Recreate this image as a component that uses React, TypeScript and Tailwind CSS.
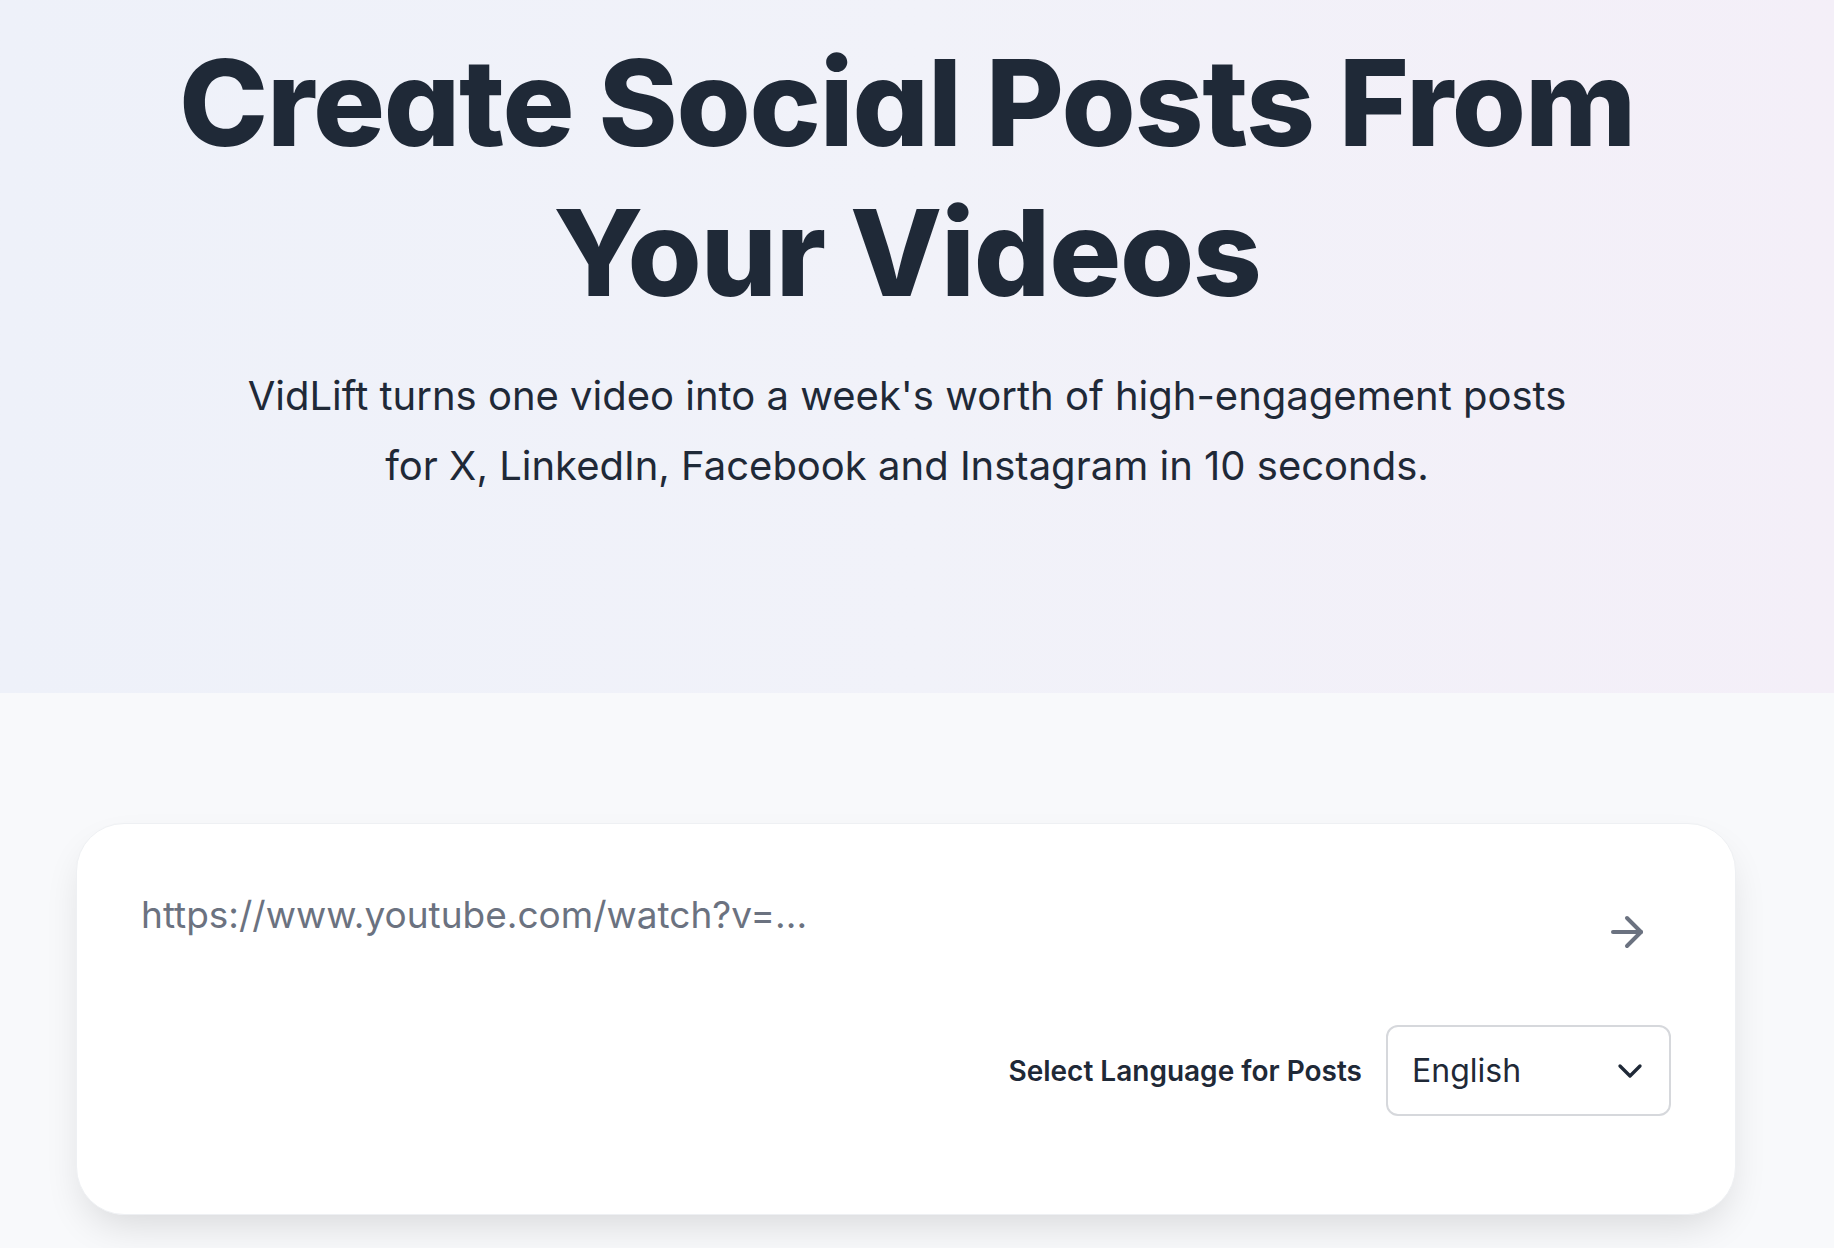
import { ArrowRight, ChevronDown } from 'lucide-react';

export default function App() {
  return (
    <div className="min-h-screen bg-[#f8f9fb] font-['Inter','Noto_Sans',sans-serif] text-[#1f2937]">
      {/* Hero */}
      <section className="h-[693px] bg-linear-to-r from-[#eef1f9] via-[#f1f2f9] to-[#f4eff8] pr-[20px]">
        <h1 className="mx-auto max-w-[1600px] pt-[28px] text-center text-[120px] leading-[150px] font-extrabold tracking-[-0.01em] [font-feature-settings:'cv11']">
          Create Social Posts From Your Videos
        </h1>
        <p className="mx-auto mt-[33px] max-w-[1370px] text-center text-[40px] leading-[70px] text-[#1f2937]">
          VidLift turns one video into a week's worth of high-engagement posts for X, LinkedIn, Facebook and Instagram in 10 seconds.
        </p>
      </section>

      {/* Input card */}
      <section className="pr-[22px] pt-[130px] pb-[40px]">
        <div className="mx-auto max-w-[1660px] rounded-[48px] border border-[#eef0f3] bg-white px-[64px] pt-[64px] pb-[98px] shadow-[0_18px_40px_-10px_rgba(0,0,0,0.14)]">
          <div className="flex items-start gap-6">
            <input
              type="text"
              placeholder="https://www.youtube.com/watch?v=..."
              className="h-[54px] flex-1 bg-transparent text-[37px] leading-[54px] text-[#1f2937] outline-none placeholder:text-[#6b7280]"
            />
            <button className="p-[20px] text-[#6b7280]">
              <ArrowRight size={48} strokeWidth={2} />
            </button>
          </div>

          <div className="mt-[49px] flex items-center justify-end gap-[24px]">
            <span className="text-[28px] font-semibold text-[#1f2937]">Select Language for Posts</span>
            <div className="flex h-[91px] w-[285px] items-center justify-between rounded-[12px] border-2 border-[#d6d8dc] pl-[24px] pr-[19px]">
              <span className="text-[32px] text-[#1f2937]">English</span>
              <ChevronDown size={40} strokeWidth={2} className="text-[#1f2937]" />
            </div>
          </div>
        </div>
      </section>
    </div>
  );
}
